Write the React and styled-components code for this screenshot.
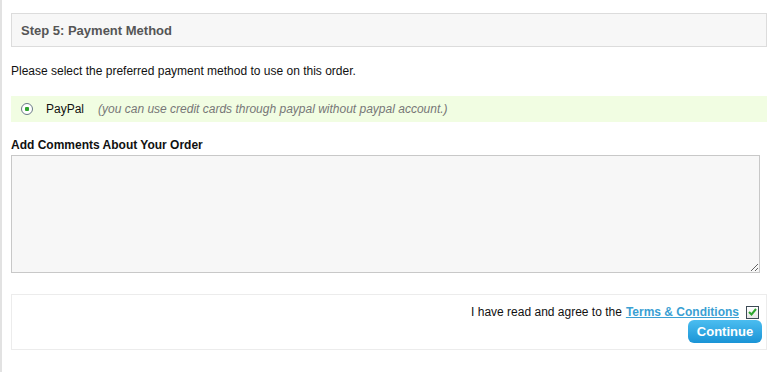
import React from "react";
import styled, { createGlobalStyle } from "styled-components";

const Global = createGlobalStyle`
  html, body { margin: 0; padding: 0; background: #fff; }
  body { font-family: "Liberation Sans", Arial, sans-serif; font-size: 12px; color: #000; }
`;

const Page = styled.div`
  border-left: 2px solid #e2e2e2;
  min-height: 372px;
  box-sizing: border-box;
  padding: 13px 3px 0 9px;
`;

const StepHeader = styled.div`
  height: 34px;
  box-sizing: border-box;
  border: 1px solid #dcdcdc;
  background: #f7f7f7;
  display: flex;
  align-items: center;
  padding-left: 9px;
  font-size: 13px;
  font-weight: bold;
  color: #555;
`;

const Intro = styled.p`
  margin: 17px 0 0;
  font-size: 12px;
  line-height: 14px;
  color: #111;
`;

const MethodRow = styled.label`
  margin-top: 18px;
  height: 26px;
  background: #f1fde2;
  display: flex;
  align-items: center;
  padding-left: 10px;
  font-size: 12px;
`;

const Radio = styled.span`
  width: 10px;
  height: 10px;
  border-radius: 50%;
  border: 1px solid #6b7a87;
  background: radial-gradient(circle, #2fa52f 0 2px, #fff 2.5px);
  margin-right: 13px;
  flex: none;
`;

const MethodName = styled.span`
  color: #111;
  margin-right: 14px;
`;

const MethodNote = styled.span`
  color: #777;
  font-style: italic;
`;

const Label = styled.div`
  margin-top: 16px;
  font-weight: bold;
  font-size: 12px;
  line-height: 14px;
  color: #111;
`;

const Comments = styled.textarea`
  display: block;
  margin-top: 3px;
  width: 749px;
  height: 118px;
  box-sizing: border-box;
  border: 1px solid #c8c8c8;
  background: #f7f7f7;
  resize: both;
  font-family: inherit;
`;

const AgreeBox = styled.div`
  margin-top: 21px;
  height: 56px;
  box-sizing: border-box;
  border: 1px solid #ececec;
  display: flex;
  flex-direction: column;
  align-items: flex-end;
  padding: 10px 7px 0 0;
`;

const AgreeLine = styled.div`
  display: flex;
  align-items: center;
  font-size: 12px;
  color: #111;
  height: 14px;
`;

const TermsLink = styled.a`
  color: #3a9fd3;
  font-weight: bold;
  text-decoration: underline;
  margin-left: 4px;
  margin-right: 7px;
`;

const Check = styled.span`
  width: 11px;
  height: 11px;
  border: 1px solid #3d4a55;
  background: linear-gradient(#fff, #e6e6e6);
  display: flex;
  align-items: center;
  justify-content: center;
`;

const ContinueButton = styled.button`
  margin-top: 1px;
  margin-right: -3px;
  width: 74px;
  height: 23px;
  border: none;
  border-radius: 6px;
  background: linear-gradient(#4bbdf0, #1a94d6);
  color: #fff;
  font-family: "Liberation Sans", Arial, sans-serif;
  font-weight: bold;
  font-size: 13px;
  padding: 0;
`;

export default function App() {
  return (
    <>
      <Global />
      <Page>
        <StepHeader>Step 5: Payment Method</StepHeader>
        <Intro>Please select the preferred payment method to use on this order.</Intro>
        <MethodRow>
          <Radio />
          <MethodName>PayPal</MethodName>
          <MethodNote>(you can use credit cards through paypal without paypal account.)</MethodNote>
        </MethodRow>
        <Label>Add Comments About Your Order</Label>
        <Comments />
        <AgreeBox>
          <AgreeLine>
            I have read and agree to the
            <TermsLink href="#">Terms &amp; Conditions</TermsLink>
            <Check>
              <svg width="9" height="8" viewBox="0 0 9 8">
                <path d="M1 4 L3.5 6.5 L8 1" fill="none" stroke="#2da52d" strokeWidth="2" />
              </svg>
            </Check>
          </AgreeLine>
          <ContinueButton>Continue</ContinueButton>
        </AgreeBox>
      </Page>
    </>
  );
}
